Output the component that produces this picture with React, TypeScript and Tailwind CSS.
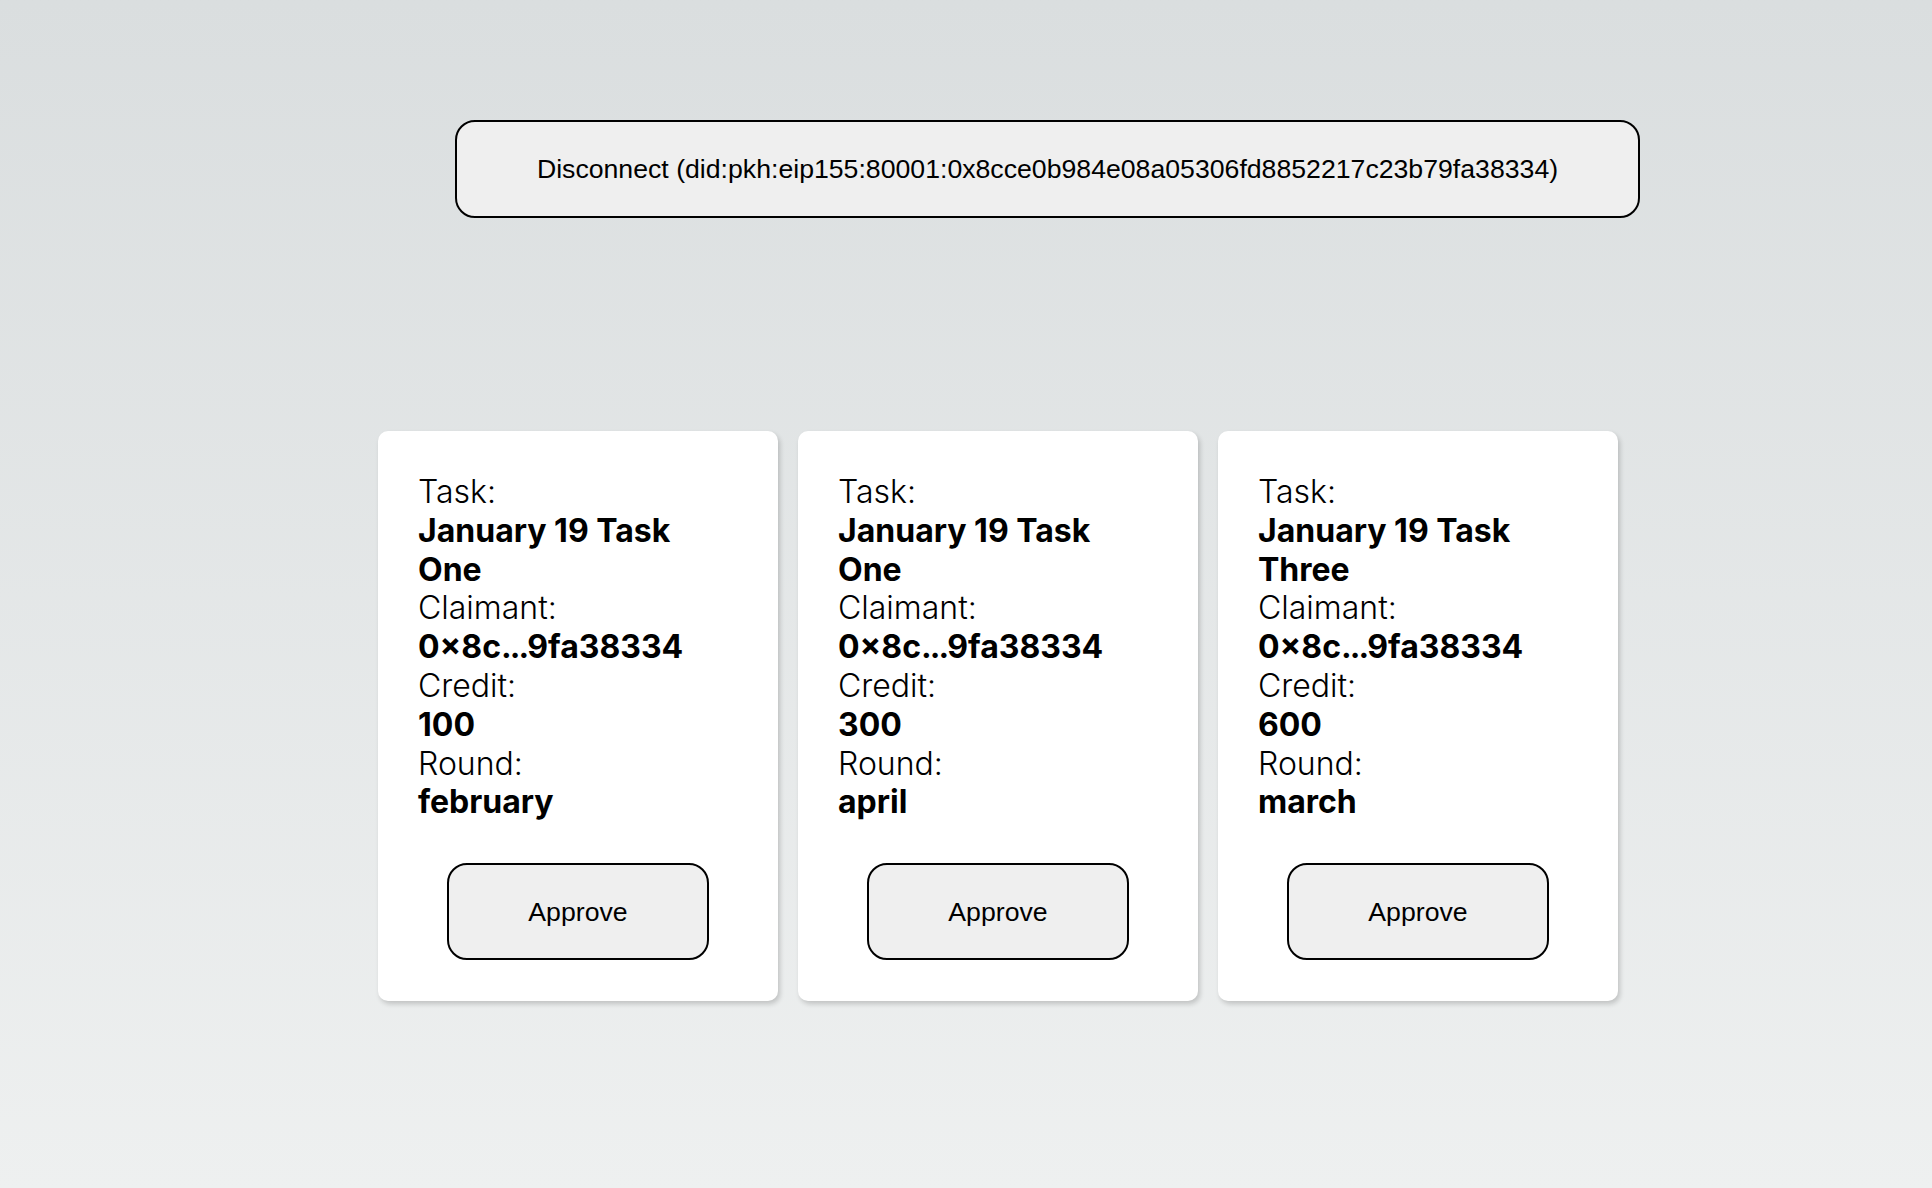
const claims = [
  { task: "January 19 Task One", claimant: ["0×8c", "...", "9fa38334"], credit: "100", round: "february" },
  { task: "January 19 Task One", claimant: ["0×8c", "...", "9fa38334"], credit: "300", round: "april" },
  { task: "January 19 Task Three", claimant: ["0×8c", "...", "9fa38334"], credit: "600", round: "march" },
];

function ClaimCard({ c }: { c: (typeof claims)[number] }) {
  return (
    <div className="flex w-[400px] flex-col rounded-[10px] bg-white px-10 pt-[42px] pb-[41px] shadow-[2px_3px_5px_rgba(0,0,0,0.18)]">
      <div className="font-['Inter',sans-serif] text-[32px] leading-[38.8px] text-black">
        <div className="font-light">Task:</div>
        <div className="font-bold">{c.task}</div>
        <div className="font-light">Claimant:</div>
        <div className="font-bold">
          {c.claimant[0]}
          <span className="tracking-[-0.06em]">{c.claimant[1]}</span>
          {c.claimant[2]}
        </div>
        <div className="font-light">Credit:</div>
        <div className="font-bold">{c.credit}</div>
        <div className="font-light">Round:</div>
        <div className="font-bold">{c.round}</div>
      </div>
      <button className="mx-auto mt-[41px] h-[97px] w-[262px] rounded-[20px] border-2 border-black bg-[#efefef] font-['Liberation_Sans',Arial,sans-serif] text-[26.67px] text-black">
        Approve
      </button>
    </div>
  );
}

export default function App() {
  return (
    <div className="min-h-[1188px] w-full bg-gradient-to-b from-[#dadedf] to-[#eef0f0] pt-[120px]">
      <button className="ml-[455px] h-[98px] w-[1185px] rounded-[20px] border-2 border-black bg-[#efefef] font-['Liberation_Sans',Arial,sans-serif] text-[26.67px] text-black">
        Disconnect (did:pkh:eip155:80001:0x8cce0b984e08a05306fd8852217c23b79fa38334)
      </button>
      <div className="ml-[378px] mt-[213px] flex gap-5">
        {claims.map((c, i) => (
          <ClaimCard key={i} c={c} />
        ))}
      </div>
    </div>
  );
}
